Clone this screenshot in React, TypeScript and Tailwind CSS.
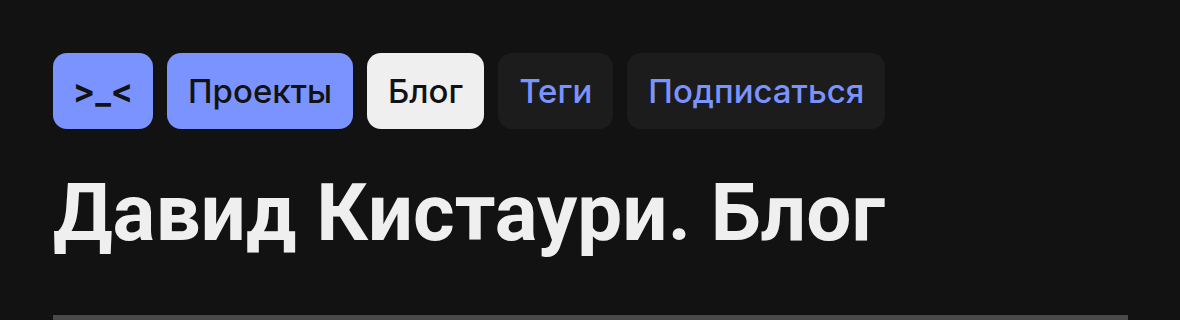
const navItems = [
  { label: '>_<', kind: 'accent', logo: true },
  { label: 'Проекты', kind: 'accent' },
  { label: 'Блог', kind: 'active' },
  { label: 'Теги', kind: 'muted' },
  { label: 'Подписаться', kind: 'muted' },
];

function NavButton({ label, kind, logo }: { label: string; kind: string; logo?: boolean }) {
  const styles =
    kind === 'accent'
      ? 'bg-[#7b93ff] text-[#121212]'
      : kind === 'active'
        ? 'bg-[#efefef] text-[#121212]'
        : 'bg-[#1c1c1c] text-[#7b93ff]';

  return (
    <a
      href="#"
      className={`flex h-[76px] items-center justify-center rounded-[14px] px-[21px] text-[33px] leading-none ${
        logo ? 'w-[100px] font-bold' : 'font-medium'
      } ${styles}`}
    >
      {label}
    </a>
  );
}

export default function App() {
  return (
    <div className="min-h-[320px] bg-[#121212] pl-[53px] pr-[52px] pt-[53px] font-['Inter',sans-serif]">
      {/* Navigation */}
      <nav className="flex gap-[14px]">
        {navItems.map((item) => (
          <NavButton key={item.label} {...item} />
        ))}
      </nav>

      {/* Heading */}
      <h1 className="mt-[44px] font-['Roboto',sans-serif] text-[80px] font-bold leading-none text-[#efefef]">
        Давид Кистаури. Блог
      </h1>

      <div className="mt-[62px] h-[12px] w-full bg-[#4a4a4a]" />
    </div>
  );
}
